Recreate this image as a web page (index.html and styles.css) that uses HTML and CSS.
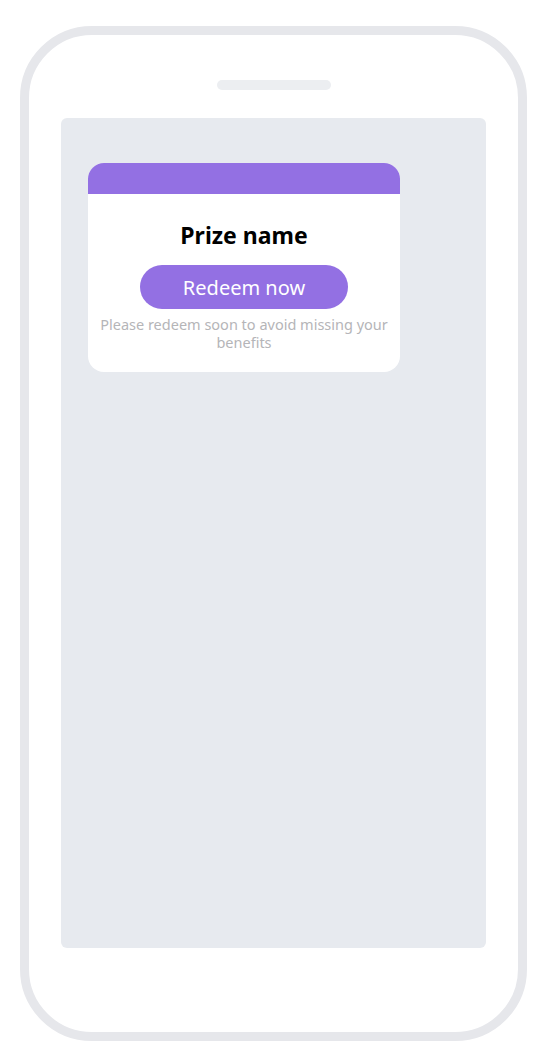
FILE: index.html
```html
<!DOCTYPE html>
<html lang="en">
<head>
    <meta charset="UTF-8">
    <meta name="viewport" content="width=device-width, initial-scale=1.0">
    <title>Prize preview</title>
    <link rel="stylesheet" href="styles.css">
</head>
<body>
    <div class="phone">
        <div class="speaker"></div>
        <div class="screen">
            <div class="prize-card">
                <div class="prize-head"></div>
                <div class="prize-body">
                    <h2 class="prize-name">Prize name</h2>
                    <button class="redeem">Redeem now</button>
                    <p class="note">Please redeem soon to avoid missing your benefits</p>
                </div>
            </div>
        </div>
    </div>
</body>
</html>
```

FILE: styles.css
```css
* {
    box-sizing: border-box;
}

body {
    margin: 0;
    padding: 26px 0 0 20px;
    background: #fff;
    font-family: "Noto Sans", "Open Sans", sans-serif;
}

.phone {
    width: 507px;
    height: 1015px;
    border: 9px solid #e6e7eb;
    border-radius: 72px;
    padding: 45px 32px 0;
    display: flex;
    flex-direction: column;
    align-items: center;
}

.speaker {
    width: 114px;
    height: 10px;
    border-radius: 5px;
    background: #eceef1;
    flex-shrink: 0;
}

.screen {
    margin-top: 28px;
    width: 100%;
    height: 830px;
    background: #e7eaef;
    border-radius: 6px;
    padding: 45px 27px;
}

.prize-card {
    width: 312px;
    background: #fff;
    border-radius: 16px;
    overflow: hidden;
}

.prize-head {
    height: 31px;
    background: #9370e3;
}

.prize-body {
    display: flex;
    flex-direction: column;
    align-items: center;
    padding: 26px 8px 21px;
}

.prize-name {
    margin: 0;
    font-size: 23px;
    line-height: 31px;
    font-weight: 700;
    color: #000;
}

.redeem {
    margin-top: 14px;
    width: 208px;
    height: 44px;
    border: none;
    border-radius: 22px;
    background: #9370e3;
    color: #fff;
    font-family: inherit;
    font-size: 20px;
    cursor: pointer;
}

.note {
    margin: 6px 0 0;
    font-size: 14.5px;
    line-height: 18px;
    color: #b5b5b8;
    text-align: center;
}
```
